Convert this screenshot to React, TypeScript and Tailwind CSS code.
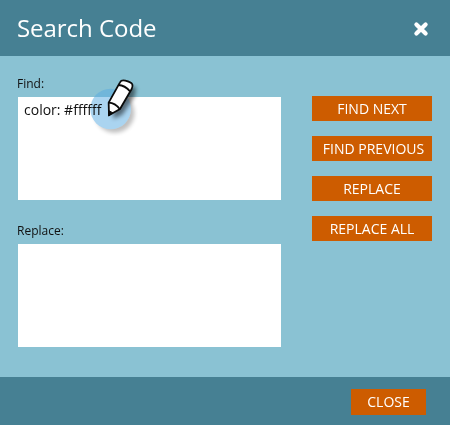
import React from "react";

function ActionButton({ label, className = "" }: { label: string; className?: string }) {
  return (
    <button className={`flex items-center justify-center whitespace-nowrap bg-[#cd5c00] text-[14px] leading-[25px] text-white ${className}`}>
      {label}
    </button>
  );
}

function PencilMarker() {
  return (
    <>
      {/* Lower part of the highlight disc, blended so the typed text stays dark */}
      <svg className="pointer-events-none absolute left-[80px] top-[97px] mix-blend-multiply" width="70" height="43" viewBox="0 81 210 129">
        <circle cx="92" cy="117" r="61" fill="#aad4f0" />
      </svg>
      <svg className="pointer-events-none absolute left-[80px] top-[70px]" width="70" height="70" viewBox="0 0 210 210">
        <defs>
          <filter id="soft" x="-50%" y="-50%" width="200%" height="200%">
            <feGaussianBlur stdDeviation="7" />
          </filter>
          <mask id="outside">
            <rect width="210" height="210" fill="#fff" />
            <circle cx="92" cy="117" r="61" fill="#000" />
          </mask>
          <clipPath id="upper">
            <rect width="210" height="81" />
          </clipPath>
        </defs>
        <g mask="url(#outside)">
          <circle cx="104" cy="129" r="59" fill="#000" opacity="0.25" filter="url(#soft)" />
        </g>
        <circle cx="92" cy="117" r="61" fill="#55aae1" opacity="0.5" clipPath="url(#upper)" />
        <path d="M100 146L100 126L136 48L168 52L164 78L127 134Z" fill="#000" opacity="0.5" filter="url(#soft)" />
        <path d="M87 136L86 98L120 37Q124 29 136 32Q153 36 157 43Q159 48 155 57L120 117Z" fill="#fff" stroke="#0a0a0a" strokeWidth="5.4" strokeLinejoin="round" />
        <path d="M115 45Q135 46 150 64M86 98Q106 99 119 117" fill="none" stroke="#0a0a0a" strokeWidth="5.4" />
        <path d="M86 122L98 128L86 138Z" fill="#0a0a0a" stroke="#0a0a0a" strokeWidth="3" />
      </svg>
    </>
  );
}

export default function App() {
  return (
    <div className="relative flex h-[425px] w-[450px] flex-col overflow-hidden bg-[#8ac2d3] font-['Open_Sans',sans-serif]">
      <header className="flex h-14 shrink-0 items-center justify-between bg-[#468093] pl-[17px] pr-[21px]">
        <h1 className="text-[24px] leading-8 tracking-[-0.04px] text-white">Search Code</h1>
        <button aria-label="Close dialog" className="mt-[2px]">
          <svg width="16" height="16" viewBox="0 0 16 16">
            <path d="M3.4 3.4L12.6 12.6M12.6 3.4L3.4 12.6" stroke="#fff" strokeWidth="4.2" strokeLinecap="round" />
          </svg>
        </button>
      </header>
      <main className="flex flex-1 justify-between pl-[17px] pr-[18px]">
        <section className="flex w-[264px] flex-col pt-[19px] text-[12px] leading-[18px] text-[#111]">
          <label htmlFor="find">Find:</label>
          <textarea id="find" spellCheck={false} defaultValue="color: #ffffff" className="ml-px mt-[4px] h-[103px] w-[263px] resize-none bg-white px-[6px] py-[3px] text-[14px] leading-5 outline-none" />
          <label htmlFor="replace" className="mt-[22px]">Replace:</label>
          <textarea id="replace" className="ml-px mt-[4px] h-[103px] w-[263px] resize-none bg-white outline-none" />
        </section>
        <nav className="flex w-[120px] flex-col gap-[15px] pt-10">
          <ActionButton label="FIND NEXT" className="h-[25px]" />
          <ActionButton label="FIND PREVIOUS" className="h-[25px] pl-[3px]" />
          <ActionButton label="REPLACE" className="h-[25px]" />
          <ActionButton label="REPLACE ALL" className="h-[25px]" />
        </nav>
      </main>
      <footer className="flex h-12 shrink-0 items-start justify-end bg-[#468093] pr-6 pt-3">
        <ActionButton label="CLOSE" className="h-[26px] w-[75px] pb-px" />
      </footer>
      <PencilMarker />
    </div>
  );
}
